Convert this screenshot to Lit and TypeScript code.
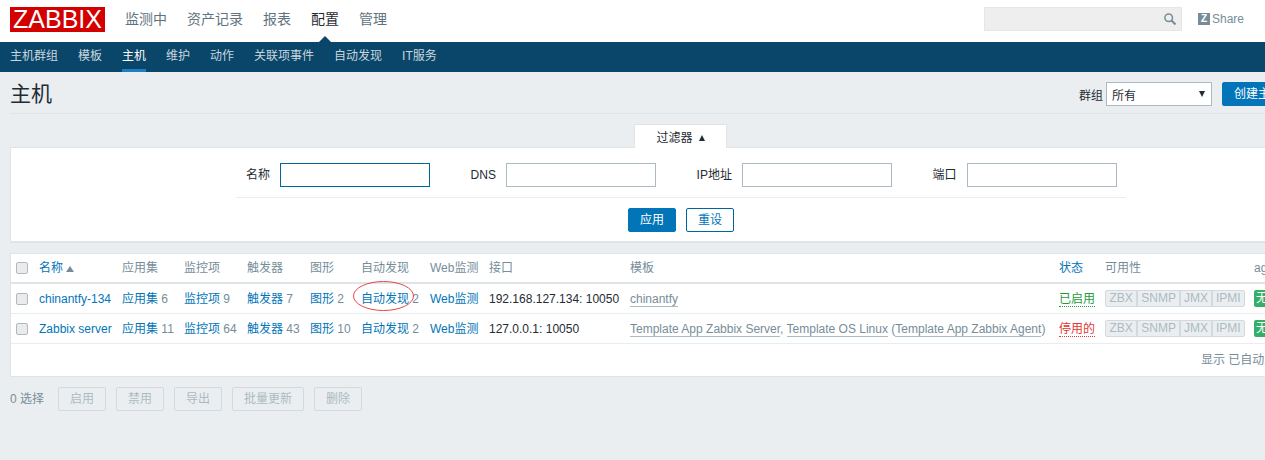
import { LitElement, html, css } from "lit";
import { customElement } from "lit/decorators.js";

const NAV = ["监测中", "资产记录", "报表", "配置", "管理"];
const SUB = ["主机群组", "模板", "主机", "维护", "动作", "关联项事件", "自动发现", "IT服务"];
const HEAD = ["应用集", "监控项", "触发器", "图形", "自动发现", "Web监测", "接口", "模板"];
const ROWS = [
  { name: "chinantfy-134", app: 6, item: 9, trig: 7, graph: 2, disc: 2, ip: "192.168.127.134: 10050", on: true },
  { name: "Zabbix server", app: 11, item: 64, trig: 43, graph: 10, disc: 2, ip: "127.0.0.1: 10050", on: false },
];

@customElement("app-root")
export class AppRoot extends LitElement {
  static styles = css`
    :host { display: block; width: 1265px; height: 460px; overflow: hidden; background: #ebeef0; position: relative;
      font: 12px/14px "Liberation Sans", "Noto Sans CJK SC", sans-serif; color: #1f2c33; }
    .top { height: 42px; background: #fff; display: flex; align-items: center; padding: 0 21px 0 10px; box-sizing: border-box; width: 1265px; }
    .logo { width: 95px; height: 25px; margin-top: -3px; background: #d40000; color: #fff; font-size: 25px; line-height: 25px; text-align: center; }
    .nav { display: flex; gap: 20px; margin-left: 20px; font-size: 14px; color: #5f737e; margin-top: -4px; }
    .nav .sel { color: #1f2c33; position: relative; }
    .nav .sel::after { content: ""; position: absolute; left: 50%; margin-left: -8px; top: 24px; border: 8px solid transparent; border-top: 0; border-bottom-color: #0a466a; }
    .search { margin-left: auto; width: 198px; height: 24px; box-sizing: border-box; background: #eeeeee; border: 1px solid #e6e6e6; display: flex; align-items: center; justify-content: flex-end; padding-right: 5px; margin-top: -4px; }
    .share { display: flex; align-items: center; gap: 2px; margin-left: 16px; color: #768d99; margin-top: -4px; }
    .z { width: 12px; height: 12px; background: #768d99; color: #fff; font-size: 10px; font-weight: bold; line-height: 12px; text-align: center; }
    .sub { height: 30px; background: #0a466a; display: flex; gap: 20px; padding-left: 10px; width: 1265px; box-sizing: border-box; }
    .sub span { color: #c9d6dd; line-height: 29px; height: 30px; box-sizing: border-box; }
    .sub .sel { color: #fff; border-bottom: 3px solid #1f7ec0; }
    .page { width: 1362px; padding: 0 10px; box-sizing: border-box; }
    .title { height: 42px; box-sizing: border-box; border-bottom: 1px solid #dfe4e7; display: flex; align-items: flex-start; padding-top: 10px; }
    h1 { margin: 0; font-size: 21px; font-weight: normal; line-height: 24px; }
    .ctl { margin-left: auto; display: flex; align-items: center; }
    .lbl { padding-top: 3px; }
    .sel-box { width: 106px; height: 24px; box-sizing: border-box; margin-left: 3px; background: #fff; border: 1px solid #acbbc2; display: flex; align-items: center; justify-content: space-between; padding: 4px 6px 0 5px; font-size: 12px; }
    .tri { width: 0; height: 0; margin-bottom: 5px; border: 3.5px solid transparent; border-bottom: 0; border-top: 6px solid #1f2c33; }
    .btn { height: 24px; box-sizing: border-box; padding: 0 11px; min-width: 48px; border-radius: 2px; background: #0275b8; border: 1px solid #0275b8; color: #fff; line-height: 22px; text-align: center; }
    .btn.alt { background: #fff; color: #0275b8; border-color: #00669e; }
    .ctl .btn { margin-left: 10px; line-height: 23px; }
    .tabrow { display: flex; justify-content: center; margin-top: 10px; padding-right: 1px; }
    .tab { width: 93px; height: 24px; box-sizing: border-box; background: #fff; border: 1px solid #dfe4e7; border-bottom: 0; display: flex; align-items: center; justify-content: center; gap: 6px; position: relative; z-index: 1; padding: 2px 0 0 0; }
    .up { width: 0; height: 0; border: 3.5px solid transparent; border-top: 0; border-bottom: 6px solid #1f2c33; }
    .filter { margin-top: -1px; height: 96px; box-sizing: border-box; background: #fff; border: 1px solid #dfe4e7; border-bottom-width: 2px; padding-top: 15px; }
    .form { width: 890px; margin: 0 auto; }
    .fields { display: flex; gap: 40.6px; padding: 0 0 10px 10px; border-bottom: 1px solid #e9edef; height: 35px; box-sizing: border-box; }
    .fld { display: flex; align-items: center; gap: 10px; height: 24px; }
    .inp { width: 150px; height: 24px; box-sizing: border-box; border: 1px solid #acbbc2; background: #fff; }
    .inp.focus { border-color: #00669e; }
    .acts { display: flex; justify-content: center; gap: 10px; padding-top: 10px; }
    .wrap { margin-top: 10px; }
    table { width: 1342px; table-layout: fixed; border-collapse: separate; border-spacing: 0; background: #fff; border: 1px solid #dfe4e7; }
    td, th { padding: 0 0 0 5px; text-align: left; font-weight: normal; white-space: nowrap; overflow: hidden; }
    col.c1 { width: 23px; } col.c2 { width: 83px; } col.c3 { width: 62px; } col.c4, col.c5 { width: 63px; }
    col.c6 { width: 51px; } col.c7 { width: 69px; } col.c8 { width: 59px; } col.c9 { width: 141px; }
    col.c10 { width: 429px; } col.c11 { width: 46px; } col.c12 { width: 149px; }
    th { height: 28px; color: #768d99; border-bottom: 2px solid #dfe4e7; }
    td { height: 29px; color: #768d99; border-bottom: 1px solid #e9edef; }
    tr.foot td { height: 32px; border-bottom: 0; text-align: right; padding-right: 10px; }
    a { color: #0275b8; text-decoration: none; }
    .cb { display: block; width: 12px; height: 12px; box-sizing: border-box; border: 1px solid #acbbc2; border-radius: 2px; background: #ebebeb; }
    .sort { display: inline-block; width: 0; height: 0; border: 4px solid transparent; border-top: 0; border-bottom: 6px solid #768d99; margin-left: 3px; }
    .dark { color: #1f2c33; }
    .tpl { border-bottom: 1px solid #acbbc2; }
    .ok { color: #1e9b3c; border-bottom: 1px dotted #1e9b3c; }
    .bad { color: #e33734; border-bottom: 1px dotted #e33734; }
    .avail { display: inline-flex; vertical-align: middle; border: 1px solid #d3dadd; border-radius: 2px; background: #ebeef0; height: 17px; box-sizing: border-box; color: #acbbc2; line-height: 15px; }
    .avail span { padding: 0 3px; border-left: 2px solid #d3dadd; text-align: center; }
    .avail span:first-child { border-left: 0; padding: 0 3.5px; }
    .enc { display: inline-block; vertical-align: middle; background: #34af67; color: #fff; height: 17px; line-height: 17px; padding: 0 2px; border-radius: 2px; }
    .ring { position: absolute; left: 352px; top: 280px; }
    .bulk { display: flex; gap: 10px; align-items: center; margin-top: 10px; }
    .cnt { color: #768d99; width: 38px; }
    .off { background: #ebeef0; border: 1px solid #d3dadd; color: #acbbc2; }
  `;

  render() {
    return html`
      <div class="top">
        <div class="logo">ZABBIX</div>
        <div class="nav">${NAV.map((n) => html`<span class=${n === "配置" ? "sel" : ""}>${n}</span>`)}</div>
        <div class="search">
          <svg width="12" height="12" viewBox="0 0 12 12" fill="none" stroke="#768d99" stroke-width="1.5"><circle cx="4.7" cy="4.7" r="3.8"/><path d="M7.5 7.5 11.5 11.5" stroke-width="2"/></svg>
        </div>
        <div class="share"><span class="z">Z</span><span>Share</span></div>
      </div>
      <div class="sub">${SUB.map((n) => html`<span class=${n === "主机" ? "sel" : ""}>${n}</span>`)}</div>
      <div class="page">
        <div class="title">
          <h1>主机</h1>
          <div class="ctl">
            <span class="lbl">群组</span>
            <div class="sel-box"><span>所有</span><i class="tri"></i></div>
            <div class="btn">创建主机</div>
            <div class="btn">导入</div>
          </div>
        </div>
        <div class="tabrow"><div class="tab"><span>过滤器</span><i class="up"></i></div></div>
        <div class="filter">
          <div class="form">
            <div class="fields">
              <div class="fld"><span>名称</span><div class="inp focus"></div></div>
              <div class="fld"><span>DNS</span><div class="inp"></div></div>
              <div class="fld"><span>IP地址</span><div class="inp"></div></div>
              <div class="fld"><span>端口</span><div class="inp"></div></div>
            </div>
            <div class="acts"><div class="btn">应用</div><div class="btn alt">重设</div></div>
          </div>
        </div>
        <div class="wrap">
          <table>
            <colgroup>
              ${Array.from({ length: 13 }, (_, i) => html`<col class="c${i + 1}" />`)}
            </colgroup>
            <tr>
              <th><i class="cb"></i></th>
              <th><a>名称</a><i class="sort"></i></th>
              ${HEAD.map((h) => html`<th>${h}</th>`)}
              <th><a>状态</a></th>
              <th>可用性</th>
              <th>agent 加密</th>
            </tr>
            ${ROWS.map(
              (r) => html`<tr>
                <td><i class="cb"></i></td>
                <td><a>${r.name}</a></td>
                <td><a>应用集</a> ${r.app}</td>
                <td><a>监控项</a> ${r.item}</td>
                <td><a>触发器</a> ${r.trig}</td>
                <td><a>图形</a> ${r.graph}</td>
                <td><a>自动发现</a> ${r.disc}</td>
                <td><a>Web监测</a></td>
                <td class="dark">${r.ip}</td>
                <td>
                  ${r.on
                    ? html`<span class="tpl">chinantfy</span>`
                    : html`<span class="tpl">Template App Zabbix Server</span>, <span class="tpl">Template OS Linux</span> (<span class="tpl">Template App Zabbix Agent</span>)`}
                </td>
                <td>${r.on ? html`<span class="ok">已启用</span>` : html`<span class="bad">停用的</span>`}</td>
                <td><div class="avail"><span>ZBX</span><span>SNMP</span><span>JMX</span><span>IPMI</span></div></td>
                <td><span class="enc">无</span></td>
              </tr>`
            )}
            <tr class="foot"><td colspan="13">显示 已自动发现的 2中的2</td></tr>
          </table>
        </div>
        <div class="bulk">
          <span class="cnt">0 选择</span>
          ${["启用", "禁用", "导出", "批量更新", "删除"].map((b) => html`<div class="btn off">${b}</div>`)}
        </div>
      </div>
      <svg class="ring" width="63" height="32" viewBox="0 0 63 32" fill="none"><ellipse cx="31.5" cy="16" rx="30" ry="14.5" stroke="#e8474c"/></svg>
    `;
  }
}
